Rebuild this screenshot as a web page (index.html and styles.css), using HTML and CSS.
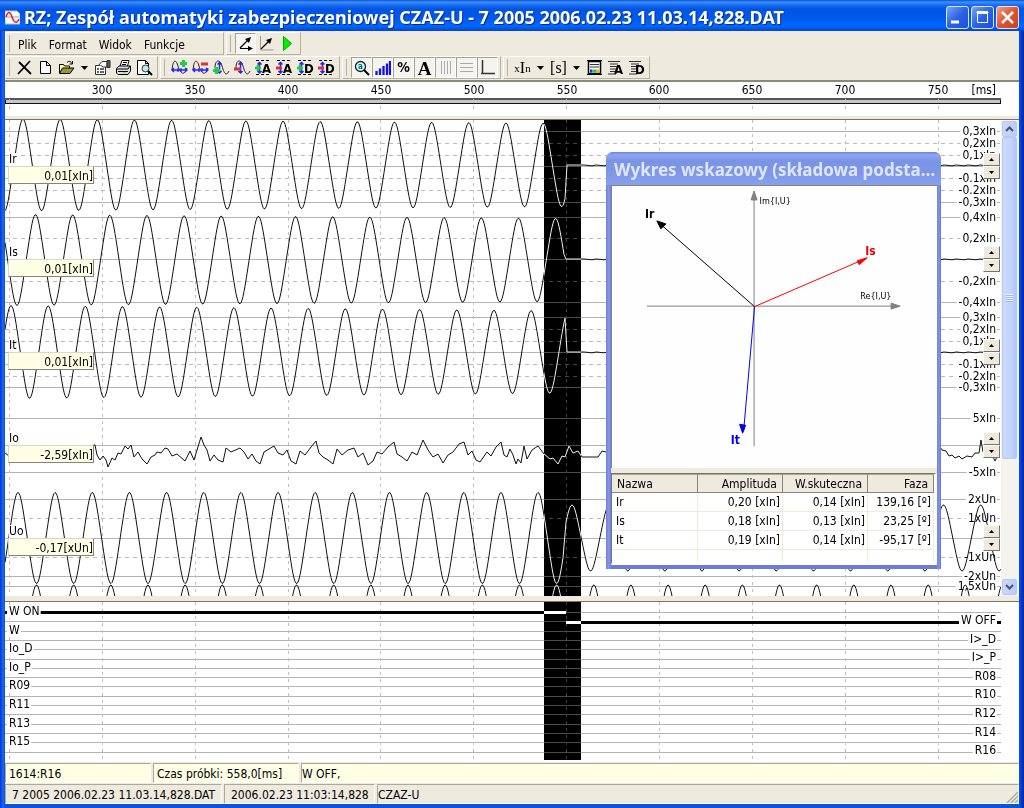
FILE: index.html
```html
<!DOCTYPE html>
<html lang="pl">
<head>
<meta charset="utf-8">
<title>RZ; Zespół automatyki zabezpieczeniowej CZAZ-U</title>
<link rel="stylesheet" href="styles.css">
</head>
<body>
<svg class="defs" width="0" height="0" aria-hidden="true">
  <symbol id="dashes" viewBox="0 0 17 17"><path d="M1 1.500h15M1 15.500h15" stroke="#000" stroke-dasharray="3 2" fill="none"/></symbol>
  <symbol id="updown" viewBox="0 0 17 17"><path d="M4.500 3v11M2.500 5.500l2-2 2 2M2.500 12l2 2 2-2" stroke="#22f" stroke-width="1.500" fill="none"/></symbol>
  <symbol id="leftright" viewBox="0 0 17 17"><path d="M1 11h15M3 9l-2 2 2 2M14 9l2 2-2 2M7 9v4M10 9v4" stroke="#22f" stroke-width="1.300" fill="none"/></symbol>
  <symbol id="plus" viewBox="0 0 7 7"><path d="M3.500 0v7M0 3.500h7" stroke="#2c4" stroke-width="3"/></symbol>
  <symbol id="sheet" viewBox="0 0 17 17"><path d="M1 2.500h12M3 5h8M3 7.500h8M3 10h6M3 12.500h6M1 15h8" stroke="#333"/></symbol>
</svg>
<main class="window">
  <header class="titlebar">
    <svg class="app-icon" viewBox="0 0 15 15"><path d="M0 1h12l3 3v10H0z" fill="#fff" stroke="#bbb"/><path d="M1 7h13" stroke="#99c"/><path d="M1 7C3 1 5 1 7 7s5 7 7 2" fill="none" stroke="#d22" stroke-width="1.500"/></svg>
    <h1>RZ; Zespół automatyki zabezpieczeniowej CZAZ-U - 7 2005 2006.02.23 11.03.14,828.DAT</h1>
    <div class="caption-buttons">
      <button class="cap" aria-label="Minimalizuj"><svg viewBox="0 0 21 21"><path d="M4 15h8" stroke="#fff" stroke-width="3"/></svg></button>
      <button class="cap" aria-label="Maksymalizuj"><svg viewBox="0 0 21 21"><path d="M5.500 6v9.500h10V6M4.500 5.500h12" stroke="#fff" fill="none"/><path d="M5 5.500h11" stroke="#fff" stroke-width="3"/></svg></button>
      <button class="cap close" aria-label="Zamknij"><svg viewBox="0 0 21 21"><path d="M5 5l11 11M16 5L5 16" stroke="#fff" stroke-width="2.500"/></svg></button>
    </div>
  </header>

  <div class="bars">
    <div class="bar-row">
      <nav class="band menu-band">
        <button>Plik</button><button>Format</button><button>Widok</button><button>Funkcje</button>
      </nav>
      <div class="band">
        <button class="tool on" aria-label="Wskazy"><svg viewBox="0 0 17 17"><path d="M3 13L12 4M3 13.500h10" stroke="#000" stroke-width="1.200"/><path d="M14 2l-2 6-4-4zM16 13.500l-5-2.500v5z"/></svg></button>
        <button class="tool" aria-label="Wykres"><svg viewBox="0 0 17 17"><path d="M2.500 1v14h13" stroke="#999" fill="none"/><path d="M3 14l8-8" stroke="#000" stroke-width="1.300"/><path d="M14 3l-2 6-4-4z"/></svg></button>
        <button class="tool" aria-label="Start"><svg viewBox="0 0 17 17"><path d="M4.500 1.500v14l8-7z" fill="#0e0" stroke="#0a0"/></svg></button>
      </div>
    </div>
    <div class="bar-row">
      <div class="band">
        <button class="tool" aria-label="Usuń"><svg viewBox="0 0 17 17"><path d="M3 3l12 12M14 2L2 15" stroke="#000" stroke-width="1.800"/></svg></button>
        <button class="tool" aria-label="Nowy"><svg viewBox="0 0 17 17"><path d="M3.500 2.500h6l4 4v8h-10zM9.500 2.500v4h4" fill="#fff" stroke="#000"/></svg></button>
        <button class="tool" aria-label="Otwórz"><svg viewBox="0 0 17 17"><path d="M1.500 14V5.500h4l1 1.500h5v2" fill="#ff9" stroke="#000"/><path d="M1.500 14.500l3-5.500h11.500l-4 5.500z" fill="#993" stroke="#000"/><path d="M9 3.500c2-2 4-1 5 1M14.500 2v3h-3" fill="none" stroke="#000"/></svg></button>
        <button class="drop" aria-label="Ostatnie pliki"><svg viewBox="0 0 7 4"><path d="M0 0h7L3.500 4z"/></svg></button>
        <button class="tool" aria-label="Właściwości"><svg viewBox="0 0 17 17"><path d="M1.500 6.500h10v9h-10z" fill="#fff" stroke="#333"/><path d="M3 10h2M6 10h4M3 13h2M6 13h4" stroke="#333" stroke-width="1.500"/><path d="M5 6l3-3.500h5V8H9L7 6.500" fill="#fff" stroke="#333"/><path d="M13 1.500h3v7h-3z" fill="#555" stroke="#333"/></svg></button>
        <button class="tool" aria-label="Drukuj"><svg viewBox="0 0 17 17"><path d="M5 7l2-5.500h7L12.500 7" fill="#fff" stroke="#000"/><path d="M8 3.500h4M7 5.500h4" stroke="#000"/><path d="M1.500 9.500L4 7h11.500v5L13 15.500H3L1.500 14z" fill="#ddd" stroke="#000"/><path d="M2 10h11l2-3M3 12.500h10" stroke="#000" fill="none"/><path d="M8 13.500h3" stroke="#cc0"/></svg></button>
        <button class="tool" aria-label="Podgląd"><svg viewBox="0 0 17 17"><path d="M1.500 1.500h8l3 3v11h-11zM9.500 1.500v3h3" fill="#fff" stroke="#000"/><circle cx="9.500" cy="9.500" r="3.500" fill="#bee" stroke="#333"/><path d="M12 12l4 4" stroke="#000" stroke-width="2"/></svg></button>
      </div>
      <div class="band">
        <button class="tool" aria-label="Rozciągnij oś czasu"><svg viewBox="0 0 17 17"><path d="M1 11C2 0 5 0 7 7s6 11 9 2" fill="none" stroke="#222"/><use href="#leftright" width="17" height="17"/><use href="#plus" x="9" y="1" width="7" height="7"/></svg></button>
        <button class="tool" aria-label="Ściśnij oś czasu"><svg viewBox="0 0 17 17"><path d="M1 11C2 0 5 0 7 7s6 11 9 2" fill="none" stroke="#222"/><use href="#leftright" width="17" height="17"/><path d="M9 5h7" stroke="#d33" stroke-width="3"/></svg></button>
        <button class="tool" aria-label="Zwiększ amplitudę"><svg viewBox="0 0 17 17"><path d="M2 9C2 0 7 0 9 7s4 11 7 5" fill="none" stroke="#222"/><use href="#updown" x="2" width="17" height="17"/><use href="#plus" x="0" y="8" width="7" height="7"/></svg></button>
        <button class="tool" aria-label="Zmniejsz amplitudę"><svg viewBox="0 0 17 17"><path d="M2 9C2 0 7 0 9 7s4 11 7 5" fill="none" stroke="#222"/><use href="#updown" x="2" width="17" height="17"/><path d="M0 10h7" stroke="#d33" stroke-width="3"/></svg></button>
        <button class="tool" aria-label="Powiększ kanały analogowe"><svg viewBox="0 0 17 17"><use href="#dashes" width="17" height="17"/><use href="#updown" width="17" height="17"/><use href="#plus" y="6" width="6" height="6"/><text x="7" y="14">A</text></svg></button>
        <button class="tool" aria-label="Pomniejsz kanały analogowe"><svg viewBox="0 0 17 17"><use href="#dashes" width="17" height="17"/><use href="#updown" width="17" height="17"/><path d="M0 9h6" stroke="#d33" stroke-width="3"/><text x="7" y="14">A</text></svg></button>
        <button class="tool" aria-label="Powiększ kanały cyfrowe"><svg viewBox="0 0 17 17"><use href="#dashes" width="17" height="17"/><use href="#updown" width="17" height="17"/><use href="#plus" y="6" width="6" height="6"/><text x="7" y="14">D</text></svg></button>
        <button class="tool" aria-label="Pomniejsz kanały cyfrowe"><svg viewBox="0 0 17 17"><use href="#dashes" width="17" height="17"/><use href="#updown" width="17" height="17"/><path d="M0 9h6" stroke="#d33" stroke-width="3"/><text x="7" y="14">D</text></svg></button>
      </div>
      <div class="band">
        <button class="tool on" aria-label="Lupa"><svg viewBox="0 0 17 17"><circle cx="7.500" cy="7.500" r="5" fill="#cff" stroke="#222" stroke-width="1.300"/><path d="M11 11l5 5" stroke="#000" stroke-width="2"/><text class="mini" x="5" y="10">a</text></svg></button>
        <button class="tool on" aria-label="Harmoniczne"><svg viewBox="0 0 17 17"><path d="M2.500 16v-4M6 16V9.500M9.500 16V7M13 16V4.500M16 16V2" stroke="#11e" stroke-width="2.300"/></svg></button>
        <button class="tool on glyph">%</button>
        <button class="tool on glyph serif">A</button>
        <button class="tool on" aria-label="Siatka pionowa"><svg viewBox="0 0 17 17"><path d="M4.500 2v13M7.500 2v13M10.500 2v13M13.500 2v13" stroke="#aaa"/></svg></button>
        <button class="tool on" aria-label="Siatka pozioma"><svg viewBox="0 0 17 17"><path d="M2 4.500h13M2 8.500h13M2 12.500h13" stroke="#aaa"/></svg></button>
        <button class="tool on" aria-label="Osie"><svg viewBox="0 0 17 17"><path d="M3.500 1v14M2 14.500h14" stroke="#333" stroke-width="1.500"/></svg></button>
      </div>
      <div class="band">
        <button class="tool unit"><small>x</small>I<sub>n</sub></button>
        <button class="drop" aria-label="Jednostka amplitudy"><svg viewBox="0 0 7 4"><path d="M0 0h7L3.500 4z"/></svg></button>
        <button class="tool unit">[s]</button>
        <button class="drop" aria-label="Jednostka czasu"><svg viewBox="0 0 7 4"><path d="M0 0h7L3.500 4z"/></svg></button>
        <button class="tool" aria-label="Legenda"><svg viewBox="0 0 17 17"><path d="M2.500 2.500h12v12h-12z" fill="#fff" stroke="#000" stroke-width="1.500"/><path d="M1 1.500h15M1 15.500h15" stroke="#000"/><path d="M4 5.500h9M4 8h9" stroke="#333"/><path d="M4 12h2" stroke="#22f" stroke-width="3"/><path d="M6 12h2" stroke="#0cc" stroke-width="3"/><path d="M8 12h2" stroke="#2c2" stroke-width="3"/><path d="M10 12h3" stroke="#fa0" stroke-width="3"/></svg></button>
        <button class="tool" aria-label="Lista kanałów analogowych"><svg viewBox="0 0 17 17"><use href="#sheet" width="17" height="17"/><text x="7" y="15">A</text></svg></button>
        <button class="tool" aria-label="Lista kanałów cyfrowych"><svg viewBox="0 0 17 17"><use href="#sheet" width="17" height="17"/><text x="7" y="15">D</text></svg></button>
      </div>
    </div>
  </div>

  <section class="ruler"><svg id="ruler"></svg></section>

  <section class="analog">
    <div class="plot">
      <svg id="analog"></svg>
      <div class="channels" id="channels"></div>
    </div>
    <div class="scrollbar">
      <button aria-label="W górę"><svg viewBox="0 0 9 6"><path d="M1 5l3.500-3.500L8 5" fill="none" stroke="#456" stroke-width="2"/></svg></button>
      <div class="thumb"><i></i></div>
      <div class="track"></div>
      <button aria-label="W dół"><svg viewBox="0 0 9 6"><path d="M1 1l3.500 3.500L8 1" fill="none" stroke="#456" stroke-width="2"/></svg></button>
    </div>

    <aside class="dialog" role="dialog" aria-label="Wykres wskazowy">
      <h2>Wykres wskazowy (składowa podsta…</h2>
      <div class="dialog-body">
        <svg class="phasor" viewBox="0 0 326 283">
          <g stroke="#808080" fill="#808080">
            <path d="M142.500 261V10M35 120.500h250"/>
            <path d="M142.500 5l-3 9h6zM289 120.500l-9-3v6z"/>
          </g>
          <path d="M143 121L46 36" stroke="#000"/><path d="M45 35l9 3-5 5z" stroke="#000"/>
          <path d="M143 121L254 73" stroke="#f00"/><path d="M256 72l-8 7-2-4z" fill="#f00" stroke="#f00"/>
          <path d="M143 121L132 246" stroke="#00e"/><path d="M131 248l-3-9 6 1z" fill="#00e" stroke="#00e"/>
          <text class="axis" x="148" y="18">Im{I,U}</text>
          <text class="axis" x="249" y="113">Re{I,U}</text>
          <text x="33" y="32">Ir</text>
          <text x="254" y="69" fill="#e00">Is</text>
          <text x="119" y="259" fill="#00e">It</text>
        </svg>
        <div class="values">
          <table>
            <thead><tr><th>Nazwa</th><th>Amplituda</th><th>W.skuteczna</th><th>Faza</th></tr></thead>
            <tbody>
              <tr><td>Ir</td><td>0,20 [xIn]</td><td>0,14 [xIn]</td><td>139,16 [º]</td></tr>
              <tr><td>Is</td><td>0,18 [xIn]</td><td>0,13 [xIn]</td><td>23,25 [º]</td></tr>
              <tr><td>It</td><td>0,19 [xIn]</td><td>0,14 [xIn]</td><td>-95,17 [º]</td></tr>
              <tr class="rest"><td></td><td></td><td></td><td></td></tr>
            </tbody>
          </table>
        </div>
      </div>
    </aside>
  </section>

  <section class="digital"><svg id="digital"></svg></section>

  <footer class="status info"><span>1614:R16</span><span>Czas próbki: 558,0[ms]</span><span>W OFF,</span></footer>
  <footer class="status file"><span>7 2005 2006.02.23 11.03.14,828.DAT</span><span>2006.02.23 11:03:14,828</span><span>CZAZ-U</span>
    <svg class="size-grip" viewBox="0 0 12 12"><path d="M12 1L1 12M12 5l-7 7M12 9l-3 3" stroke="#aaa" stroke-width="1.500"/></svg>
  </footer>
</main>
<script src="script.js"></script>
</body>
</html>
```

FILE: styles.css
```css
* { box-sizing: border-box; }
body {
  margin: 0;
  font: 12px/13px "DejaVu Sans Condensed", "DejaVu Sans", sans-serif;
  color: #000;
}
button { font: inherit; color: inherit; padding: 0; border: 0; background: none; }
.defs { position: absolute; }

.window {
  display: flex;
  flex-direction: column;
  min-height: 100vh;
  padding: 0 5px 4px;
  background: linear-gradient(90deg, #0831d9 0, #166aee 3px, #0855dd 5px, #0855dd calc(100% - 5px), #0040e0 calc(100% - 3px), #001ea0 100%);
}
.titlebar {
  display: flex;
  align-items: center;
  gap: 4px;
  height: 31px;
  margin: 0 -5px;
  padding: 3px 5px 0;
  background: linear-gradient(#0a4fd0 0, #3b90ff 2px, #1a6cf0 5px, #0054e3 9px, #0058ea 18px, #0068ff 26px, #0046d0 31px);
}
.app-icon { width: 15px; height: 15px; flex: none; }
.titlebar h1 {
  flex: 1;
  margin: 0;
  font: bold 18px/24px "Noto Sans", sans-serif;
  color: #fff;
  text-shadow: 1px 1px #0a2a90;
  white-space: nowrap;
  overflow: hidden;
}
.caption-buttons { display: flex; gap: 2px; }
.cap {
  width: 23px;
  height: 23px;
  border: 1px solid #dce6ff;
  border-radius: 3px;
  background: linear-gradient(135deg, #7ba2f6, #2a62e8 50%, #1d4fd8);
}
.cap svg { display: block; width: 21px; height: 21px; }
.cap.close { background: linear-gradient(135deg, #f0a088, #e2532c 50%, #c8401c); }

.bars { background: #eeeade; border-bottom: 2px solid #8b897c; padding: 1px 0 0; }
.bar-row { display: flex; height: 24px; }
.band {
  display: flex;
  align-items: center;
  height: 23px;
  padding: 0 2px 0 8px;
  margin-right: 2px;
  border: 1px solid;
  border-color: #fff #b5b2a5 #b5b2a5 #fff;
  background: linear-gradient(#b5b2a5, #b5b2a5) 3px 2px / 1px 17px no-repeat;
}
.menu-band { padding: 3px 32px 0 6px; }
.menu-band button { padding: 0 6px; }
.tool {
  display: grid;
  place-items: center;
  min-width: 21px;
  height: 21px;
  border: 1px solid transparent;
}
.tool svg { width: 17px; height: 17px; }
.tool text { font: bold 13px "DejaVu Sans Condensed", sans-serif; }
.tool .mini { font-size: 8px; fill: #066; }
.tool.on { border-color: #a5a294 #fff #fff #a5a294; background: #f6f4ee; }
.glyph { font-size: 14px; font-weight: bold; }
.serif { font: bold 19px "Liberation Serif", serif; }
.drop { width: 15px; height: 21px; display: grid; place-items: center; }
.drop svg { width: 7px; height: 4px; }
.unit { display: flex; align-items: center; justify-content: center; font: 16px "Liberation Serif", serif; }
.unit small, .unit sub { font-size: 11px; }

.ruler { background: #fff; height: 37px; border-bottom: 3px solid #eeeade; }
svg { display: block; }
.ruler svg, .plot > svg, .digital svg { width: 100%; height: 100%; }
.ruler text, .plot text, .digital text { font: 12px "DejaVu Sans Condensed", sans-serif; }

.analog {
  position: relative;
  display: flex;
  flex: 1;
  min-height: 478px;
  background: #fff;
  border-top: 1px solid #77756a;
  border-bottom: 5px solid #eeeade;
}
.plot { position: relative; flex: 1; overflow: hidden; }
.plot > svg { position: absolute; inset: 0; }
.channels { position: relative; display: grid; grid-auto-rows: 93px; }
.channel { display: flex; justify-content: space-between; padding: 33px 1px 0 3px; }
.probe { display: flex; flex-direction: column; align-items: flex-start; }
.probe label { background: #fff; margin-left: 1px; }
.probe output {
  width: 86px;
  height: 18px;
  padding: 3px 0 0;
  text-align: right;
  background: #ffffe6;
  border: 1px solid;
  border-color: #d8d8c8 #85857a #85857a #d8d8c8;
}
.spin { display: flex; flex-direction: column; }
.spin button {
  display: grid;
  place-items: center;
  width: 17px;
  height: 13px;
  background: #eeeade;
  border: 1px solid;
  border-color: #fff #77756a #77756a #fff;
}
.spin svg { width: 5px; height: 3px; }

.scrollbar { display: flex; flex-direction: column; width: 18px; background: #f4f3ee; padding: 1px 2px 1px 1px; }
.scrollbar button, .thumb {
  display: grid;
  place-items: center;
  height: 16px;
  flex: none;
  border: 1px solid #b4c8f6;
  border-radius: 2px;
  background: linear-gradient(90deg, #cad8fd, #b8cbf8);
}
.scrollbar button svg { width: 9px; height: 6px; }
.thumb { flex: 322 1 0; background: linear-gradient(90deg, #cbdafd, #c2d3fc 60%, #b0c6f6); }
.thumb i { width: 7px; height: 8px; background: repeating-linear-gradient(#eef4fe 0 1px, #9db8f0 1px 2px); }
.track { flex: 121 1 0; }

.dialog {
  position: absolute;
  left: 601px;
  top: 32px;
  width: 335px;
  padding: 0 4px 4px 5px;
  border-radius: 7px 7px 0 0;
  background: linear-gradient(90deg, #6f80dc, #8797f0 3px, #6b7cda 5px, #6b7cda calc(100% - 4px), #8797f0 calc(100% - 2px), #6070d0);
}
.dialog h2 {
  margin: 0 -4px 0 -5px;
  padding: 6px 0 4px 8px;
  border-radius: 7px 7px 0 0;
  font: bold 17px/23px "Noto Sans", sans-serif;
  color: #dde6ff;
  white-space: nowrap;
  background: linear-gradient(#6d83dc, #8fa6f2 3px, #7b93e4 9px, #7d96e6 20px, #86a0ee 32px);
}
.dialog-body { background: #eeeade; }
.phasor { width: 100%; background: #fefefe; border: 1px solid #85857a; border-right: 0; border-bottom: 0; }
.phasor text { font: bold 12px "DejaVu Sans Condensed", sans-serif; }
.phasor .axis { font-size: 9px; font-weight: normal; }
.values { margin-top: 5px; border: 1px solid #77756a; border-right: 3px solid #fff; border-bottom: 3px solid #fff; background: #fff; }
table { width: 100%; border-collapse: separate; border-spacing: 0; table-layout: fixed; }
th, td { padding: 0 2px 0 4px; height: 19px; text-align: right; font-weight: normal; border-right: 1px solid #eeeade; border-bottom: 1px solid #eeeade; }
th { padding: 2px 5px 0; background: #eeeade; border-color: #85857a; border-top: 1px solid #aaa89c; }
th:nth-child(1) { width: 86px; }
th:nth-child(2), th:nth-child(3) { width: 85px; }
th:first-child, td:first-child { text-align: left; }
.rest td { height: 12px; border-bottom: 0; }

.digital {
  height: 161px;
  background: #fff;
  border-top: 1px solid #77756a;
}

.status { display: flex; gap: 2px; background: #eeeade; }
.status span { border: 1px solid; border-color: #aaa89c #fff #fff #aaa89c; white-space: nowrap; }
.info { padding: 1px 0 1px; }
.info span { background: #ffffe6; height: 20px; padding: 4px 3px 3px; width: 146px; }
.info span:nth-child(3) { padding: 4px 0; }
.info span:last-of-type, .file span:last-of-type { flex: 1; }
.file { position: relative; }
.file span { height: 20px; padding: 4px 6px; }
.file span:nth-child(1) { width: 217px; }
.file span:nth-child(2) { width: 151px; }
.file span:nth-child(3) { padding: 4px 0; }
.size-grip { position: absolute; right: 1px; bottom: 1px; width: 12px; height: 12px; }
```

FILE: script.js
```js
const NS = "http://www.w3.org/2000/svg";
const PERIOD = 37.15;
const GRID_STEP = 92.85;
const FAULT = 562;

function add(svg, name, attrs, text) {
  const el = document.createElementNS(NS, name);
  for (const key in attrs) el.setAttribute(key, attrs[key]);
  if (text !== undefined) el.textContent = text;
  svg.appendChild(el);
  return el;
}
function hline(svg, y, x1, x2, dashed) {
  add(svg, "path", { d: `M${x1} ${y + 0.5}H${x2}`, stroke: dashed ? "#bdb8bd" : "#b4b4b4", "stroke-dasharray": dashed ? "4 4" : "none" });
}
function verticals(svg, y1, y2, width) {
  for (let i = 0; i < (width - 50) / GRID_STEP; i++) {
    const x = Math.round(4 + i * GRID_STEP) + 0.5;
    add(svg, "path", { d: `M${x} ${y1}V${y2}`, stroke: "#c4bcc4", "stroke-dasharray": "3 4" });
  }
}
function tag(svg, x, y, text, anchor) {
  const label = add(svg, "text", { x, y: y + 4, "text-anchor": anchor }, text);
  const box = label.getBBox();
  const back = add(svg, "rect", { x: box.x - 2, y: y - 6, width: box.width + 3, height: 13, fill: "#fff" });
  svg.insertBefore(back, label);
}
function curve(svg, points) {
  add(svg, "polyline", { points: points.map(p => p.join(",")).join(" "), fill: "none", stroke: "#111", "stroke-width": 1 });
}
function sine(x1, x2, peak, centre, ampStart, ampEnd) {
  const out = [];
  for (let x = x1; x <= x2; x += 1) {
    const a = (x - peak) / PERIOD * 2 * Math.PI;
    const amp = ampStart + (ampEnd - ampStart) * x / FAULT;
    out.push([x, (centre - amp * (0.97 * Math.cos(a) + 0.03 * Math.cos(3 * a))).toFixed(1)]);
  }
  return out;
}
function flat(x1, x2, y) {
  const out = [];
  for (let x = x1; x <= x2; x += 4) out.push([x, y + (x > 580 ? (x * 7 % 3) * 0.4 : 0)]);
  return out;
}
function cursor(svg, height) {
  add(svg, "rect", { x: 539, y: 0, width: 37, height, fill: "#fff", style: "mix-blend-mode:difference" });
}

function drawRuler() {
  const svg = document.getElementById("ruler");
  const w = svg.clientWidth;
  svg.replaceChildren();
  add(svg, "rect", { x: 0.5, y: 16.5, width: w - 19, height: 5, fill: "#c8c8c8", stroke: "#111" });
  add(svg, "path", { d: `M0 17H${w - 18}`, stroke: "#555", "stroke-width": 2 });
  verticals(svg, 17, 30, w);
  for (let i = 1; i < (w - 70) / GRID_STEP; i++) {
    add(svg, "text", { x: Math.round(4.5 + i * GRID_STEP), y: 12, "text-anchor": "middle" }, 250 + i * 50);
  }
  add(svg, "text", { x: w - 23, y: 12, "text-anchor": "end" }, "[ms]");
}

const scales = [
  [11, "0,3xIn"], [23, "0,2xIn", 1], [35, "0,1xIn", 1], [46], [58, "-0.1xIn", 1], [70, "-0.2xIn", 1], [82, "-0,3xIn"],
  [97, "0,4xIn"], [118, "0,2xIn", 1], [139], [161, "-0,2xIn", 1], [182, "-0,4xIn"],
  [197, "0,3xIn"], [209, "0,2xIn", 1], [221, "0,1xIn", 1], [232], [244, "-0.1xIn", 1], [256, "-0.2xIn", 1], [267, "-0,3xIn"],
  [298, "5xIn"], [325], [352, "-5xIn"],
  [379, "2xUn"], [398, "1xUn", 1], [418], [437, "-1xUn", 1], [456, "-2xUn"], [466, "1,5xUn"]
];
const ripple = [
  [0, 333], [4, 336], [8, 331], [12, 334], [17, 338], [22, 332], [28, 328], [34, 337], [40, 340], [47, 331], [53, 328], [60, 335], [66, 343], [72, 334], [78, 332], [84, 326],
  [90, 325], [92, 335], [95, 340], [98, 336], [101, 340], [103, 347], [107, 338], [110, 340], [113, 333], [116, 334], [120, 326], [123, 329], [126, 325],
  [129, 337], [133, 332], [137, 339], [142, 344], [146, 337], [150, 335], [152, 332], [156, 333], [160, 328], [163, 329], [167, 336], [172, 334], [180, 341],
  [185, 331], [189, 340], [192, 330], [196, 317], [199, 325], [202, 330], [205, 341], [209, 335], [213, 340], [218, 342], [221, 328], [226, 332], [235, 328],
  [239, 332], [243, 339], [247, 334], [251, 341], [255, 344], [259, 332], [264, 329], [269, 326], [273, 333], [278, 335], [282, 330], [286, 341], [291, 344],
  [295, 331], [300, 335], [306, 327], [311, 321], [314, 333], [318, 337], [323, 340], [328, 344], [332, 329], [337, 335], [343, 330], [349, 328], [353, 337],
  [358, 333], [363, 345], [368, 341], [372, 332], [377, 334], [383, 327], [389, 322], [392, 334], [397, 337], [402, 341], [407, 332], [412, 335], [418, 320],
  [423, 330], [428, 337], [433, 334], [438, 343], [443, 335], [448, 332], [454, 324], [459, 322], [463, 335], [467, 331], [471, 340], [475, 342],
  [482, 332], [486, 336], [491, 327], [496, 322], [499, 335], [502, 337], [505, 329], [508, 335], [511, 344], [513, 339], [516, 343], [519, 326], [522, 339],
  [527, 330], [533, 326], [539, 334], [545, 339], [548, 338], [553, 344], [557, 336], [560, 337], [564, 326], [568, 333], [573, 331], [577, 337], [593, 337], [597, 331],
  [601, 332], [935, 327], [937, 330], [941, 331], [944, 336], [947, 335], [950, 338], [954, 336], [957, 339], [962, 336], [967, 337], [970, 333], [974, 333], [976, 320], [978, 332],
  [983, 327], [990, 341], [993, 335]
];
function drawAnalog() {
  const svg = document.getElementById("analog");
  const w = svg.clientWidth;
  svg.replaceChildren();
  for (const [y, , dashed] of scales) hline(svg, y, 0, w - 1, dashed);
  verticals(svg, 0, svg.clientHeight, w);
  for (const [y, text] of scales) if (text) tag(svg, w - 5, y, text, "end");
  curve(svg, [...sine(0, 560, 18, 45, 46, 41.5), [562, 45], ...flat(563, w, 45)]);
  curve(svg, [...sine(0, 559, 30.5, 140, 45.5, 41.5), [561, 139], ...flat(563, w, 139)]);
  curve(svg, [...sine(0, 560, 6, 232, 46.5, 41), [562, 232], ...flat(563, w, 232)]);
  curve(svg, ripple);
  curve(svg, [...sine(0, 558, 13, 418, 45.5, 45.5), ...sine(561, w, 567, 418, 33, 33)]);
  curve(svg, sine(0, w, 31.5, 509, 44, 44));
  cursor(svg, svg.clientHeight);
}

function drawDigital() {
  const svg = document.getElementById("digital");
  const w = svg.clientWidth;
  const right = w - 18;
  svg.replaceChildren();
  for (let i = 0; i < 16; i++) hline(svg, Math.round(10 + i * 9.3), 0, right, false);
  verticals(svg, 0, 158, w);
  add(svg, "path", { d: `M0 10.500H561M561 20.500H${right}`, stroke: "#000", "stroke-width": 3 });
  ["W ON", "W", "Io_D", "Io_P", "R09", "R11", "R13", "R15"].forEach((t, i) => tag(svg, 4, Math.round(9 + i * 18.6), t, "start"));
  ["W OFF", "I>_D", "I>_P", "R08", "R10", "R12", "R14", "R16"].forEach((t, i) => tag(svg, right - 5, Math.round(18 + i * 18.6), t, "end"));
  cursor(svg, 158);
}

const probes = [["Ir", "0,01[xIn]"], ["Is", "0,01[xIn]"], ["It", "0,01[xIn]"], ["Io", "-2,59[xIn]"], ["Uo", "-0,17[xUn]"]];
document.getElementById("channels").innerHTML = probes.map(([name, value]) => `
  <div class="channel">
    <div class="probe"><label for="probe-${name}">${name}</label><output id="probe-${name}">${value}</output></div>
    <div class="spin">
      <button aria-label="${name} w górę"><svg viewBox="0 0 5 3"><path d="M0 3h5L2.500 0z"/></svg></button>
      <button aria-label="${name} w dół"><svg viewBox="0 0 5 3"><path d="M0 0h5L2.500 3z"/></svg></button>
    </div>
  </div>`).join("");

function draw() { drawRuler(); drawAnalog(); drawDigital(); }
draw();
addEventListener("resize", draw);
```
